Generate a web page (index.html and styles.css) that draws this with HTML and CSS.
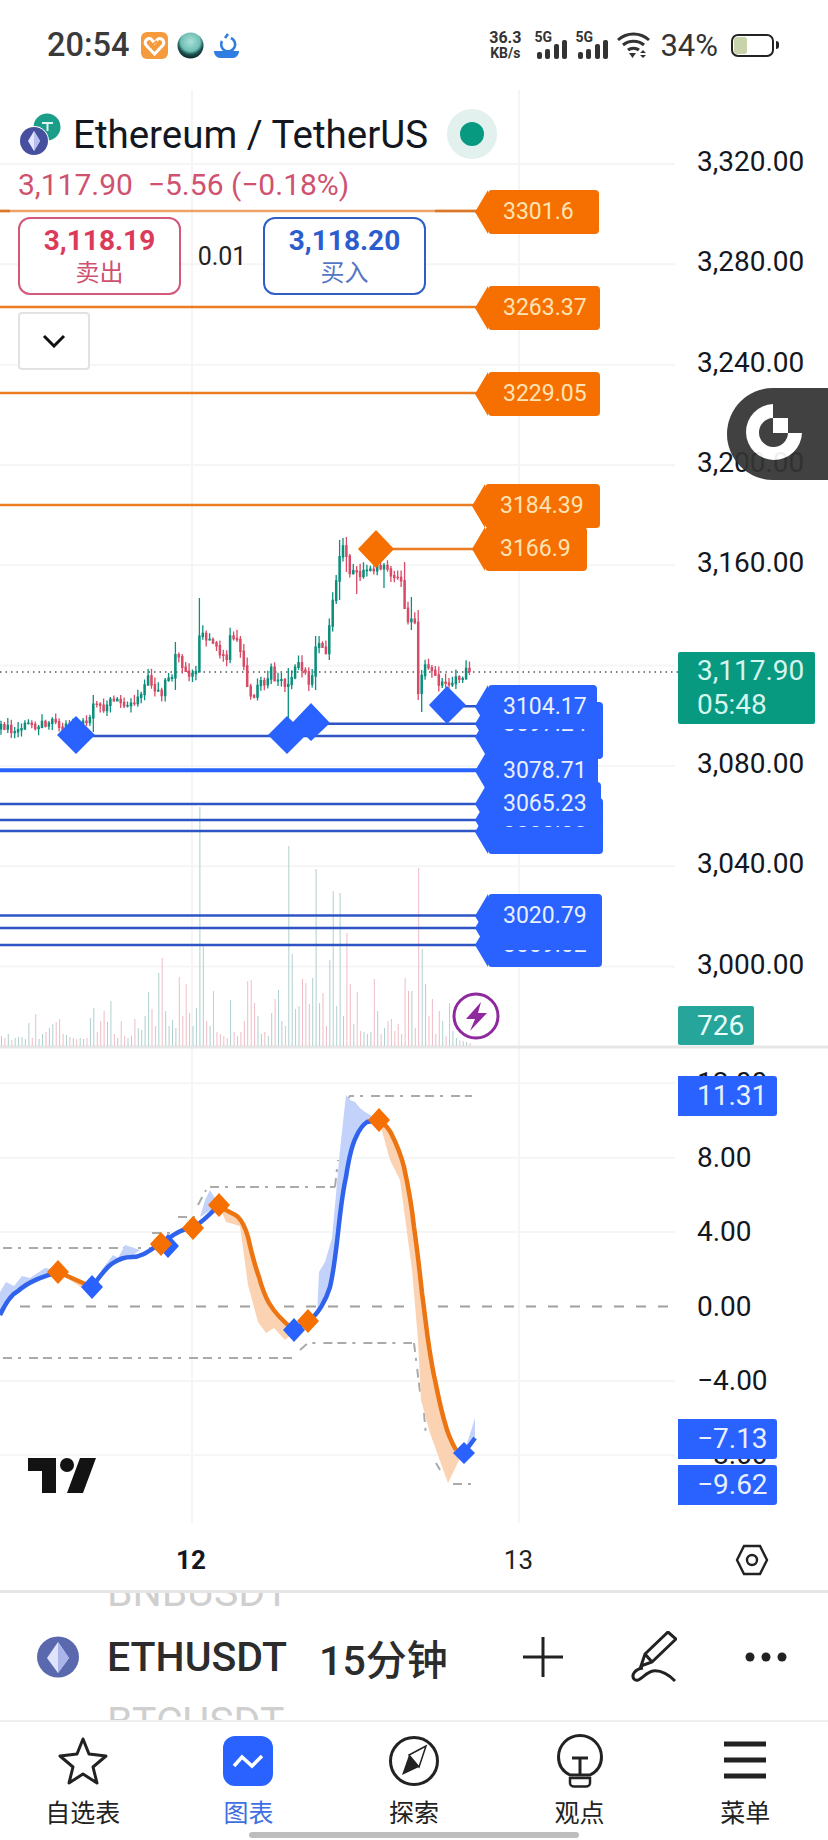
FILE: index.html
```html
<!DOCTYPE html>
<html lang="zh-CN">
<head>
  <meta charset="UTF-8" />
  <meta name="viewport" content="width=device-width, initial-scale=1.0"/>
  <title>ETHUSDT 15分钟</title>
  <link rel="stylesheet" href="styles.css">
</head>
<body>
  <div class="phone">

    <div class="status-bar">
      <div class="status-left">
        <span class="clock">20:54</span>
        <svg class="app-icon" viewBox="0 0 27 27">
          <rect width="27" height="27" rx="6" fill="#f59b3d"/>
          <path d="M13.5 22 5 13c-3-4 3-9 6-5l2.500 3 2.500-3c3-4 9 1 6 5z" fill="none" stroke="#fff" stroke-width="3"/>
          <path d="M9 15l7-6M12 18l6-5" stroke="#f59b3d" stroke-width="2"/>
        </svg>
        <svg class="app-icon" viewBox="0 0 27 27">
          <defs>
            <radialGradient id="ball" cx=".5" cy=".35" r=".62">
              <stop offset="0" stop-color="#a9e0d8"/>
              <stop offset=".6" stop-color="#6fbfb5"/>
              <stop offset=".8" stop-color="#1c5452"/>
              <stop offset="1" stop-color="#0c2d2c"/>
            </radialGradient>
          </defs>
          <circle cx="13.500" cy="13.500" r="13" fill="url(#ball)"/>
        </svg>
        <svg class="app-icon" viewBox="0 0 27 27">
          <path d="M15 2L12 6M18 6a7 7 0 1 1-9 3" fill="none" stroke="#2f7de0" stroke-width="2.600"/>
          <path d="M1 19h25c0 4-3 7-6 7H7c-3 0-6-3-6-7z" fill="#2f7de0"/>
        </svg>
      </div>
      <div class="status-right">
        <div class="net-speed"><b>36.3</b><b class="net-unit">KB/s</b></div>
        <div class="sim">
          <b>5G</b>
          <span class="bars"><i class="b1"></i><i class="b2"></i><i class="b3"></i><i class="b4"></i></span>
        </div>
        <div class="sim">
          <b>5G</b>
          <span class="bars"><i class="b1"></i><i class="b2"></i><i class="b3"></i><i class="b4"></i></span>
        </div>
        <svg class="wifi" viewBox="0 0 35 27">
          <path d="M2 8c9-8 22-8 31 0M7 13c6-5 15-5 21 0M12 18c3-2.500 8-2.500 11 0" fill="none" stroke="#333" stroke-width="3"/>
          <path d="M13 21h7l-3.500 5zM24 21l3-3 3 3zM24 23h6l-3 3z" fill="#333"/>
        </svg>
        <span class="battery-pct">34%</span>
        <div class="battery"><span class="battery-level"></span></div>
        <span class="battery-nub"></span>
      </div>
    </div>

    <div class="chart" id="chart">
      <svg class="chart-canvas" viewBox="0 90 828 1434" width="828" height="1434">
        <g id="grid" class="grid"></g>
        <path class="pane-line" d="M0 1047H828"/>
        <path class="last-price" d="M0 672H678"/>
        <g id="volume"></g>
        <path id="wicksUp" class="wick up"/>
        <path id="wicksDown" class="wick down"/>
        <path id="bodiesUp" class="body up"/>
        <path id="bodiesDown" class="body down"/>
        <g id="tagLines"></g>
        <path class="dia-orange" d="M376 530l18 19-18 19-18-19z"/>
        <path class="dia-blue" d="M76 716l19 19-19 19-19-19zM287 716l19 19-19 19-19-19zM311 703l19 20-19 18-19-18zM447 686l19 19-19 19-18-19z"/>

        <!-- oscillator pane -->
        <path class="zero-line" d="M20 1306.500H675"/>
        <path class="step-line" d="M3 1248H150M152 1233H172M178 1217H195M198 1205L206 1190M210 1187H335M335 1187L338 1160M347 1100L350 1096H472M3 1358H298M300 1350L308 1343H412M414 1343L420 1392M424 1413L426 1436M436 1463L440 1470M453 1484H472"/>
        <path class="fill-blue" d="M0 1312V1292L6 1282L14 1286L22 1276L30 1278L45 1268L58 1270L32 1284L14 1296ZM92 1287L103 1268L113 1255L118 1258L125 1245L140 1250L127 1259L113 1265ZM200 1217L205 1200L210 1190L219 1205ZM317 1317L319 1272L325 1262L332 1238L340 1150L346 1095L350 1100L355 1102L360 1108L365 1112L379 1120L367 1122L356 1137L346 1177L338 1233L330 1287ZM464 1453L475 1418L475 1438Z"/>
        <path class="fill-orange" d="M58 1272L85 1290L92 1287ZM219 1205L226 1222L240 1226L248 1285L258 1322L266 1333L274 1328L285 1340L294 1332L269 1303L259 1277L248 1237L238 1217ZM379 1120L390 1160L400 1180L412 1270L418 1340L421 1400L430 1433L448 1483L460 1458L445 1423L435 1380L430 1353L422 1293L414 1227L404 1167L391 1133Z"/>
        <path class="osc-blue" d="M0 1315C6 1302 12 1294 18 1291C30 1280 46 1276 58 1272M92 1287C100 1276 107 1266 113 1263C120 1258 126 1257 132 1257C142 1257 150 1250 158 1245C170 1238 180 1228 193 1228C205 1220 212 1212 219 1205M294 1330L308 1321C318 1315 326 1300 330 1287C334 1270 336 1250 338 1233C341 1205 343 1190 346 1177C349 1157 352 1145 356 1137C360 1128 364 1124 367 1122L379 1120M464 1453L475 1438"/>
        <path class="osc-orange" d="M58 1272L92 1287M219 1205C226 1212 232 1212 238 1217C243 1222 246 1230 248 1237C252 1255 255 1266 259 1277C262 1288 265 1296 269 1303C276 1315 285 1323 294 1330M379 1120C385 1123 388 1128 391 1133C397 1145 401 1155 404 1167C409 1190 412 1208 414 1227C418 1255 420 1275 422 1293C425 1315 427 1335 430 1353C432 1365 433 1372 435 1380C438 1395 441 1410 445 1423C448 1435 452 1443 456 1450"/>
        <path class="dia-blue" d="M92 1275l11 12-11 12-11-12zM168 1234l11 12-11 12-11-12zM294 1318l11 12-11 12-11-12zM464 1442l11 11-11 11-11-11z"/>
        <path class="dia-orange" d="M58 1260l11 12-11 12-11-12zM161 1232l11 12-11 12-11-12zM193 1216l11 12-11 12-11-12zM219 1193l11 12-11 12-11-12zM308 1309l11 12-11 12-11-12zM379 1108l11 12-11 12-11-12z"/>

        <!-- tradingview mark -->
        <path class="tv-mark" d="M28 1458H56V1493H42V1471H28ZM80 1458H96L83 1493H67Z"/>
        <circle class="tv-mark" cx="67" cy="1465" r="7"/>

        <!-- alert -->
        <circle class="bolt-ring" cx="476" cy="1016" r="22"/>
        <path class="bolt" d="M481 1002L466 1019H475L470 1031L487 1013H478Z"/>
      </svg>

      <div class="legend">
        <div class="legend-title">
          <svg class="coins" viewBox="0 0 42 42">
            <circle cx="27" cy="14" r="13.500" fill="#1a9e8a"/>
            <path d="M22 10h11M27.500 10v8" stroke="#dff5f0" stroke-width="2"/>
            <circle cx="14" cy="28" r="15" fill="#fff"/>
            <circle cx="14" cy="28" r="14" fill="#46509f"/>
            <path d="M14 18l6 10-6 10-6-10z" fill="#e3e7fb"/>
            <path d="M14 18v20l6-10z" fill="#b6bff0"/>
          </svg>
          <span class="symbol-name">Ethereum / TetherUS</span>
          <span class="market-dot"></span>
        </div>
        <div class="legend-price">3,117.90&nbsp; −5.56 (−0.18%)</div>
        <div class="quotes">
          <div class="quote sell"><b>3,118.19</b><span>卖出</span></div>
          <span class="spread">0.01</span>
          <div class="quote buy"><b>3,118.20</b><span>买入</span></div>
        </div>
        <div class="collapse">
          <svg viewBox="0 0 24 14" width="24" height="14"><path d="M2 2l10 10L22 2" fill="none" stroke="#111" stroke-width="3"/></svg>
        </div>
      </div>

      <div class="float-btn">
        <svg viewBox="0 0 60 60" width="60" height="60">
          <path d="M29 1A28 28 0 1 0 58 30H44A14.500 14.500 0 1 1 29 15Z" fill="#fff"/>
          <rect x="29" y="15" width="15" height="15" fill="#fff"/>
        </svg>
      </div>
    </div>

    <div class="time-axis">
      <span class="tick tick-day">12</span>
      <span class="tick tick-next">13</span>
      <svg class="axis-settings" viewBox="0 0 34 32" width="34" height="32">
        <path d="M9 2H25L32 16L25 30H9L2 16Z" fill="none" stroke="#222" stroke-width="2.400"/>
        <circle cx="17" cy="16" r="5" fill="none" stroke="#222" stroke-width="2.400"/>
      </svg>
    </div>

    <div class="toolbar">
      <svg class="eth-icon" viewBox="0 0 44 42">
        <ellipse cx="22" cy="21" rx="21" ry="20.500" fill="#5a68ad"/>
        <path d="M22 6l11 16-11 15-11-15z" fill="#dfe4fb"/>
        <path d="M22 6v31l11-15z" fill="#aab5ea"/>
      </svg>
      <div class="picker">
        <div class="picker-row faded">BNBUSDT</div>
        <div class="picker-row"><span>ETHUSDT</span><span class="interval">15分钟</span></div>
        <div class="picker-row faded">BTCUSDT</div>
      </div>
      <div class="tools">
        <svg viewBox="0 0 40 40" width="40" height="40"><path d="M20 0V40M0 20H40" stroke="#222" stroke-width="3"/></svg>
        <svg viewBox="0 0 46 52" width="46" height="52">
          <path d="M37 1L45 8L21 31L10 35L14 23ZM14 23L21 31" fill="none" stroke="#222" stroke-width="3"/>
          <path d="M12 37C4 38 0 44 3 48C8 53 14 41 22 40C30 39 38 44 44 50" fill="none" stroke="#222" stroke-width="3"/>
        </svg>
        <svg viewBox="0 0 42 10" width="42" height="10"><circle cx="5" cy="5" r="4.500" fill="#222"/><circle cx="21" cy="5" r="4.500" fill="#222"/><circle cx="37" cy="5" r="4.500" fill="#222"/></svg>
      </div>
    </div>

    <div class="nav">
      <div class="nav-item">
        <svg viewBox="0 0 50 50" width="50" height="50"><path d="M25 3L31 18L48 20L35 31L39 47L25 38L11 47L15 31L2 20L19 18Z" fill="none" stroke="#222" stroke-width="3" stroke-linejoin="round"/></svg>
        <span>自选表</span>
      </div>
      <div class="nav-item active">
        <svg viewBox="0 0 50 50" width="50" height="50">
          <rect width="50" height="50" rx="12" fill="#2962ff"/>
          <path d="M11 30L19 21L29 30L39 20" fill="none" stroke="#fff" stroke-width="3.500"/>
        </svg>
        <span>图表</span>
      </div>
      <div class="nav-item">
        <svg viewBox="0 0 50 50" width="50" height="50">
          <circle cx="25" cy="25" r="23.500" fill="none" stroke="#222" stroke-width="3"/>
          <path d="M37 10L30 31L13 39L20 19Z" fill="#222"/>
          <path d="M37 10L20 19L30 31Z" fill="#fff" stroke="#222" stroke-width="1.500"/>
        </svg>
        <span>探索</span>
      </div>
      <div class="nav-item">
        <svg viewBox="0 0 46 54" width="46" height="54">
          <path d="M13 41C5 37 1.500 30 1.500 23A21.500 21.500 0 0 1 44.500 23C44.500 30 41 37 33 41Z" fill="none" stroke="#222" stroke-width="3"/>
          <path d="M15 24H31M23 24V41" stroke="#222" stroke-width="3"/>
          <path d="M13 44H33V49C33 51 31 52.500 29 52.500H17C15 52.500 13 51 13 49Z" fill="none" stroke="#222" stroke-width="2.500"/>
        </svg>
        <span>观点</span>
      </div>
      <div class="nav-item">
        <svg viewBox="0 0 42 50" width="42" height="50"><path d="M0 8H42M0 24H42M0 40H42" stroke="#222" stroke-width="5"/></svg>
        <span>菜单</span>
      </div>
    </div>

    <div class="home-bar"></div>
  </div>

  <script src="chart.js"></script>
</body>
</html>
```

FILE: styles.css
```css
* { box-sizing: border-box; }
body {
  margin: 0;
  background: #fff;
  font-family: Roboto, "Noto Sans CJK SC", sans-serif;
  color: #131722;
}
.phone {
  position: relative;
  width: 828px;
  height: 1840px;
  overflow: hidden;
  display: flex;
  flex-direction: column;
}

/* status bar */
.status-bar {
  height: 90px;
  flex: none;
  display: flex;
  justify-content: space-between;
  align-items: center;
  padding: 0 49px 0 47px;
}
.status-left, .status-right {
  display: flex;
  align-items: center;
}
.clock {
  font-size: 32.5px;
  font-weight: 500;
  color: #3a3a3a;
  margin-right: 12px;
}
.app-icon {
  width: 27px;
  height: 27px;
  margin-right: 9px;
}
.net-speed {
  display: flex;
  flex-direction: column;
  align-items: center;
  font-size: 16px;
  line-height: 16px;
  color: #333;
  margin-right: 13px;
}
.net-unit { font-size: 14px; line-height: 14px; }
.sim {
  position: relative;
  width: 33px;
  height: 28px;
  margin-right: 8px;
  font-size: 14px;
  line-height: 12px;
  color: #333;
}
.bars {
  position: absolute;
  right: 0;
  bottom: 0;
  display: flex;
  align-items: flex-end;
  gap: 3.5px;
}
.bars i {
  display: block;
  width: 5px;
  background: #333;
  border-radius: 2px;
}
.b1 { height: 7px; }
.b2 { height: 10px; }
.b3 { height: 15px; }
.b4 { height: 19px; }
.wifi {
  width: 35px;
  height: 27px;
  margin-right: 9px;
}
.battery-pct {
  font-size: 31px;
  color: #333;
  margin-right: 13px;
}
.battery {
  width: 43px;
  height: 23px;
  border: 2.5px solid #222;
  border-radius: 7px;
  padding: 1px;
}
.battery-level {
  display: block;
  width: 13px;
  height: 100%;
  background: #c9d3aa;
  border-radius: 3px;
}
.battery-nub {
  width: 3px;
  height: 8px;
  margin-left: 2px;
  background: #222;
  border-radius: 0 3px 3px 0;
}

/* chart */
.chart {
  position: relative;
  height: 1434px;
  flex: none;
  overflow: hidden;
}
.chart-canvas {
  position: absolute;
  left: 0;
  top: 0;
}
.grid path { stroke: #f5f5f5; stroke-width: 2; fill: none; }
.pane-line { stroke: #e6e6e6; stroke-width: 3; }
.last-price { stroke: #555; stroke-width: 1.5; stroke-dasharray: 1.5 4; }
.wick { fill: none; stroke-width: 1.3; }
.body { fill: none; stroke-width: 2.5; }
.up { stroke: #0b8f7c; }
.down { stroke: #d84a66; }
.dia-orange { fill: #f57000; }
.dia-blue { fill: #2962ff; }
.zero-line { stroke: #a0a0a0; stroke-width: 2; stroke-dasharray: 10 12; }
.step-line { fill: none; stroke: #aaa; stroke-width: 2; stroke-dasharray: 9 6 3 8 9 5; }
.fill-blue { fill: #c2d2fb; }
.fill-orange { fill: #fbd2b2; }
.osc-blue, .osc-orange { fill: none; stroke-width: 4.5; }
.osc-blue { stroke: #2f63ec; }
.osc-orange { stroke: #ec7411; }
.tv-mark { fill: #131313; }
.bolt-ring { fill: #fff; stroke: #8e2a9e; stroke-width: 3; }
.bolt { fill: #8e2a9e; }

.axis-label {
  position: absolute;
  left: 697px;
  transform: translateY(-50%);
  font-size: 28px;
  line-height: 32px;
  color: #131722;
}

/* order tags on the chart */
.tag {
  position: absolute;
  height: 44px;
  padding-left: 15px;
  border-radius: 4px;
  font-size: 23px;
  line-height: 44px;
}
.tag::before {
  content: "";
  position: absolute;
  left: -13px;
  top: 0;
  border-style: solid;
  border-width: 22px 13px 22px 0;
  border-color: transparent;
}
.tag-orange { background: #f57000; color: #ffe3b5; }
.tag-orange::before { border-right-color: #f57000; }
.tag-blue { background: #2962ff; color: #e8efff; }
.tag-blue::before { border-right-color: #2962ff; }

/* value boxes on the price scale */
.scale-tag {
  position: absolute;
  left: 678px;
  padding-left: 19px;
  border-radius: 2px;
  font-size: 28px;
  line-height: 39px;
}
.scale-blue { width: 99px; height: 40px; background: #2962ff; color: #e8efff; border-radius: 0 3px 3px 0; }
.scale-vol { width: 76px; height: 39px; background: #26a69a; color: #eafffb; }
.scale-last {
  width: 137px;
  height: 72px;
  line-height: 34px;
  padding-top: 2px;
  background: #089981;
  color: #d5f5ee;
}

.legend {
  position: absolute;
  left: 18px;
  top: 18px;
}
.legend-title {
  display: flex;
  align-items: center;
  margin-left: 2px;
  height: 52px;
}
.coins {
  width: 42px;
  height: 42px;
  margin-right: 11px;
}
.symbol-name {
  font-size: 38.5px;
  color: #131722;
}
.market-dot {
  width: 50px;
  height: 50px;
  margin-left: 19px;
  border-radius: 50%;
  border: 13px solid #e2f1ee;
  background: #089981;
}
.legend-price {
  margin-top: 7px;
  font-size: 30px;
  line-height: 36px;
  color: #cf5270;
}
.quotes {
  display: flex;
  align-items: center;
  margin-top: 14px;
}
.quote {
  width: 163px;
  height: 78px;
  border: 2px solid;
  border-radius: 12px;
  display: flex;
  flex-direction: column;
  align-items: center;
  justify-content: center;
  background: #fff;
}
.quote b {
  font-size: 28px;
  line-height: 34px;
}
.quote span {
  font-size: 24px;
  line-height: 30px;
}
.sell { border-color: #d4587a; }
.sell b { color: #dc3a5a; }
.sell span { color: #cf5270; }
.buy { border-color: #2f5fc4; }
.buy b { color: #2c5dcf; }
.buy span { color: #5576c4; }
.spread {
  width: 82px;
  text-align: center;
  font-size: 25px;
  color: #222;
}
.collapse {
  display: flex;
  align-items: center;
  justify-content: center;
  width: 72px;
  height: 58px;
  margin-top: 17px;
  border: 2px solid #e2e2e2;
  border-radius: 4px;
  background: #fff;
}

.float-btn {
  position: absolute;
  left: 727px;
  top: 298px;
  width: 101px;
  height: 92px;
  padding: 15px 0 0 17px;
  background: #333;
  border-radius: 46px 0 0 46px;
  opacity: .93;
}

/* time axis */
.time-axis {
  height: 66px;
  flex: none;
  display: flex;
  align-items: center;
  padding: 6px 59px 0 176px;
}
.tick { font-size: 26px; }
.tick-day { font-weight: 700; }
.tick-next { margin-left: 298px; color: #222; }
.axis-settings { margin-left: auto; }

/* symbol toolbar */
.toolbar {
  height: 132px;
  flex: none;
  display: flex;
  align-items: center;
  padding: 0 43px 0 36px;
  overflow: hidden;
  border-top: 3px solid #e6e6e6;
  border-bottom: 2px solid #eee;
}
.eth-icon {
  width: 44px;
  height: 42px;
  flex: none;
  margin-right: 27px;
}
.picker {
  width: 378px;
  flex: none;
}
.picker-row {
  display: flex;
  gap: 32px;
  height: 65px;
  align-items: center;
  font-size: 41px;
  font-weight: 500;
  color: #2c2c2c;
  white-space: nowrap;
}
.faded { color: #cfcfcf; font-weight: 400; }
.tools {
  display: flex;
  align-items: center;
  gap: 68px;
  margin-left: 38px;
}

/* bottom nav */
.nav {
  flex: 1;
  display: grid;
  grid-template-columns: repeat(5, 1fr);
  padding-top: 12px;
}
.nav-item {
  display: flex;
  flex-direction: column;
  align-items: center;
  justify-content: flex-start;
}
.nav-item svg { height: 54px; }
.nav-item span {
  margin-top: 10px;
  font-size: 25px;
  line-height: 32px;
  color: #222;
}
.nav-item.active span { color: #3f6fe0; }
.home-bar {
  position: absolute;
  left: 249px;
  bottom: 2px;
  width: 330px;
  height: 6px;
  background: #bdbdbd;
  border-radius: 3px;
}
```

FILE: chart.js
```javascript
const SVG_NS = 'http://www.w3.org/2000/svg';
const TOP = 90; // page y of the chart box
const STEP = 3.42; // 96 bars between day 12 and day 13

const priceY = p => 164 + (3320 - p) * 2.508;
const oscY = v => 1306.5 - v * 18.6;

const chart = document.getElementById('chart');

function addHtml(cls, text, y, extra) {
  const el = document.createElement('div');
  el.className = cls;
  el.innerHTML = text;
  el.style.top = (y - TOP) + 'px';
  if (extra) Object.assign(el.style, extra);
  chart.appendChild(el);
  return el;
}

function addLine(parent, d, stroke, width) {
  const p = document.createElementNS(SVG_NS, 'path');
  p.setAttribute('d', d);
  p.setAttribute('stroke', stroke);
  p.setAttribute('stroke-width', width);
  parent.appendChild(p);
}

// grid
const grid = document.getElementById('grid');
[192, 519].forEach(x => addLine(grid, `M${x} 90V1523`));
for (let p = 3320; p >= 3000; p -= 40) addLine(grid, `M0 ${priceY(p)}H675`);
[12, 8, 4, -4, -8].forEach(v => addLine(grid, `M0 ${oscY(v)}H675`));

// closes picked off by eye, [x, y] on the page
const closes = [
  [0,728],[5,725],[13,733],[23,726],[30,723],[37,725],[50,720],[58,717],[60,735],[67,723],[88,723],
  [93,707],[100,705],[103,707],[110,700],[127,702],[133,703],[143,688],[148,677],[155,688],[162,695],
  [165,682],[173,678],[175,657],[180,653],[183,670],[190,673],[197,673],[199,637],[203,635],[207,643],
  [213,640],[220,657],[227,658],[230,637],[237,640],[243,660],[248,693],[253,703],[258,682],[267,683],
  [272,667],[275,680],[280,680],[287,690],[292,677],[297,660],[302,670],[308,667],[310,702],[315,647],
  [320,640],[327,653],[330,613],[335,593],[340,553],[345,543],[350,577],[355,570],[360,573],[370,567],
  [383,567],[393,577],[402,577],[405,613],[410,620],[417,620],[418,690],[423,673],[427,663],[433,673],
  [440,683],[445,683],[455,680],[462,677],[468,667],[475,673]
];
// long wicks: bar index -> [high, low]
const wicks = {
  27:[695,732], 51:[642,690], 58:[598,668], 84:[668,722], 92:[636,690], 99:[540,600], 101:[537,572],
  104:[566,594], 112:[563,588], 118:[562,590], 120:[597,630], 122:[610,700], 123:[670,712]
};
const volumes = [
  10,8,12,6,8,9,9,7,23,8,32,7,12,14,18,22,24,27,12,11,9,8,7,8,7,8,28,38,14,25,35,24,45,12,8,25,10,8,10,27,
  18,16,30,54,37,20,73,88,35,20,26,18,69,30,62,33,20,38,239,100,25,20,55,14,12,10,8,46,14,10,14,25,65,66,43,30,
  12,14,10,33,47,56,25,20,200,92,37,40,67,63,42,68,177,43,53,20,86,155,40,153,30,113,62,22,54,15,14,12,14,67,
  35,12,18,25,27,15,22,12,68,55,55,18,178,97,62,30,47,12,35,25,10,43,15,8,6,5,4,3,2
];

function closeAt(x) {
  for (let i = 1; i < closes.length; i++) {
    if (x <= closes[i][0]) {
      const [x0, y0] = closes[i - 1];
      const [x1, y1] = closes[i];
      return y0 + (y1 - y0) * (x - x0) / (x1 - x0);
    }
  }
  return closes[closes.length - 1][1];
}

// fixed noise so every load draws the same bars
function noise(i) {
  const n = Math.sin(i * 12.9898) * 43758.5453;
  return n - Math.floor(n);
}

const paths = { wicksUp: '', wicksDown: '', bodiesUp: '', bodiesDown: '' };
const volumeLayer = document.getElementById('volume');
let prev = closeAt(0);

for (let i = 0; i < 138; i++) {
  const x = +(i * STEP + 1).toFixed(1);
  const close = closeAt(x) + (noise(i) - 0.5) * 7;
  const up = close < prev; // y runs down the page
  const key = up ? 'Up' : 'Down';
  const top = Math.min(prev, close);
  const bottom = Math.max(prev, close);
  const [high, low] = wicks[i] || [top - 1 - noise(i + 50) * 7, bottom + 1 + noise(i + 90) * 7];

  paths['wicks' + key] += `M${x} ${high.toFixed(1)}V${low.toFixed(1)}`;
  paths['bodies' + key] += `M${x} ${top.toFixed(1)}V${(bottom + 1.5).toFixed(1)}`;
  prev = close;

  const h = volumes[i] || 2;
  const bar = document.createElementNS(SVG_NS, 'rect');
  bar.setAttribute('x', x);
  bar.setAttribute('y', 1046 - h);
  bar.setAttribute('width', 1);
  bar.setAttribute('height', h);
  bar.setAttribute('fill', up ? '#afd0cf' : '#efbcc6');
  volumeLayer.appendChild(bar);
}
Object.keys(paths).forEach(id => document.getElementById(id).setAttribute('d', paths[id]));

// price scale
for (let p = 3320; p >= 3000; p -= 40) {
  if (p === 3120) continue;
  addHtml('axis-label', p.toLocaleString('en-US') + '.00', priceY(p) - 2);
}
[12, 8, 4, 0, -4, -8].forEach(v => {
  addHtml('axis-label', (v < 0 ? '−' + (-v) : v) + '.00', oscY(v));
});

// order tags, last ones sit on top. width, line start x, line weight
const tags = [
  { price: 3301.6, color: 'orange', w: 111, from: 0, text: '3301.6', line: '#eaa36b' },
  { price: 3263.37, color: 'orange', w: 112, from: 0, text: '3263.37' },
  { price: 3229.05, color: 'orange', w: 112, from: 0, text: '3229.05' },
  { price: 3184.39, color: 'orange', w: 115, from: 0, text: '3184.39', left: 485 },
  { price: 3166.9, color: 'orange', w: 102, from: 376, text: '3166.9', left: 485 },
  { price: 3092.3, color: 'blue', w: 115, from: 76, text: '' },
  { price: 3097.24, color: 'blue', w: 115, from: 311, text: '3097.24' },
  { price: 3104.17, color: 'blue', w: 109, from: 447, text: '3104.17' },
  { price: 3054.4, color: 'blue', w: 115, from: 0, text: '' },
  { price: 3058.85, color: 'blue', w: 115, from: 0, text: '3058.85' },
  { price: 3078.71, color: 'blue', w: 110, from: 0, text: '3078.71', weight: 4, line: '#2962ff' },
  { price: 3065.23, color: 'blue', w: 113, from: 0, text: '3065.23' },
  { price: 3009.02, color: 'blue', w: 114, from: 0, text: '3009.02' },
  { price: 3015.8, color: 'blue', w: 114, from: 0, text: '' },
  { price: 3020.79, color: 'blue', w: 114, from: 0, text: '3020.79' }
];
const tagLines = document.getElementById('tagLines');
tags.forEach(t => {
  const y = priceY(t.price) + 1;
  const stroke = t.line || (t.color === 'orange' ? '#ea7c22' : '#2d55c4');
  addLine(tagLines, `M${t.from} ${y.toFixed(1)}H480`, stroke, t.weight || 2.5);
  addHtml(`tag tag-${t.color}`, t.text, y - 21.5, { left: (t.left || 488) + 'px', width: t.w + 'px' });
});
addLine(tagLines, `M0 ${(priceY(3301.6) + 1).toFixed(1)}H10M435 ${(priceY(3301.6) + 1).toFixed(1)}H480`, '#d9772a', 2.5);

// boxes on the scale
addHtml('scale-tag scale-last', '3,117.90<br>05:48', 652);
addHtml('scale-tag scale-vol', '726', 1006);
addHtml('scale-tag scale-blue', '11.31', oscY(11.31) - 20);
addHtml('scale-tag scale-blue', '−7.13', oscY(-7.13) - 20);
addHtml('scale-tag scale-blue', '−9.62', oscY(-9.62) - 20);

// keep the floating button above everything added above
chart.appendChild(document.querySelector('.float-btn'));
```
